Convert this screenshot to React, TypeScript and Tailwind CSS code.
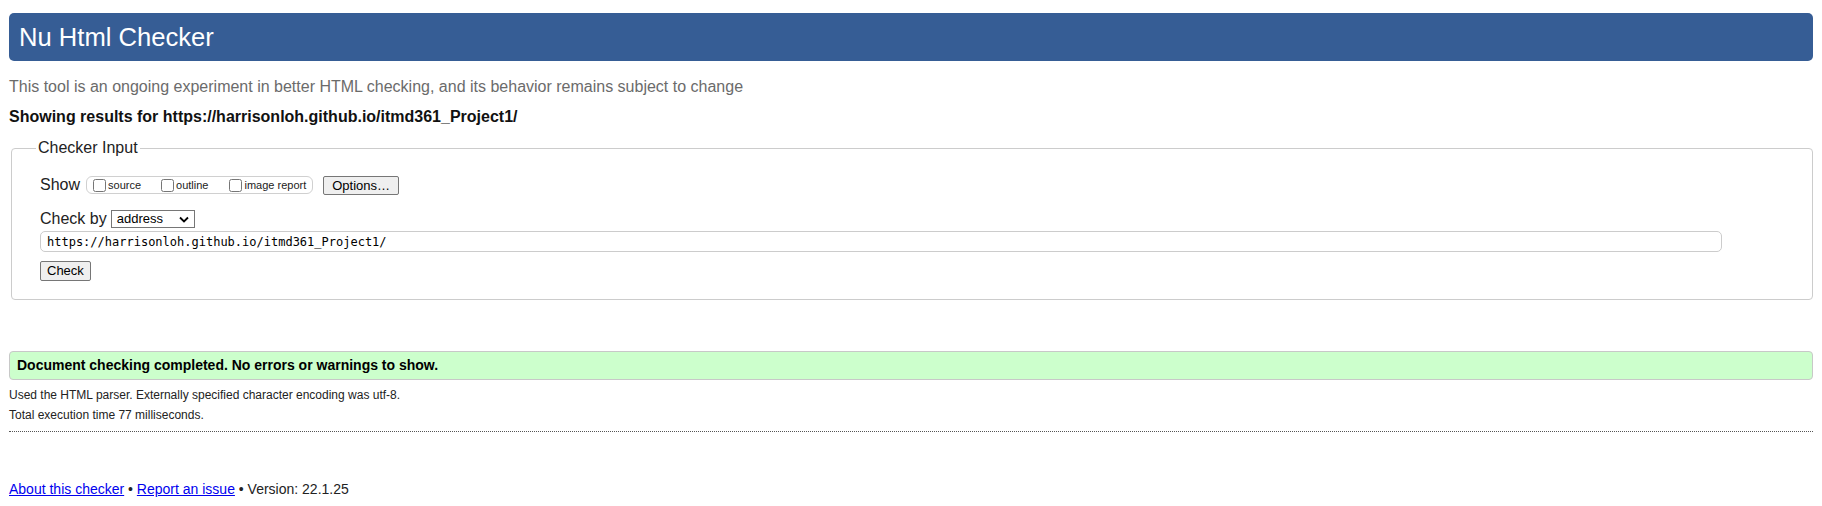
import React from "react";

function Cb({ label, className = "" }: { label: string; className?: string }) {
  return (
    <label className={"inline-flex items-center " + className}>
      <input type="checkbox" className="m-0 w-[13px] h-[13px]" defaultChecked={false} />
      <span className="ml-[2px] text-[11px] leading-[13px] text-[#222]">{label}</span>
    </label>
  );
}

export default function App() {
  return (
    <div className="min-h-[506px] bg-white px-[9px] pt-[13px] font-['Liberation_Sans',Arial,sans-serif] text-black">
      <div className="flex h-[48px] items-center rounded-[5px] bg-[#365d95] pl-[10px] text-[25.6px] text-white">
        Nu Html Checker
      </div>
      <p className="mt-[17px] text-[16px] leading-[18px] text-[#6b6b6b]">
        This tool is an ongoing experiment in better HTML checking, and its behavior remains subject to change
      </p>
      <p className="mt-[12px] text-[16px] font-bold leading-[18px] text-[#111]">
        Showing results for https://harrisonloh.github.io/itmd361_Project1/
      </p>
      <fieldset className="mt-[13px] ml-[2px] rounded-[4px] border border-[#cccccc] pb-[17px] pl-[28px]">
        <legend className="-ml-[4px] px-[2px] text-[16px] leading-[18px] text-[#222]">Checker Input</legend>
        <div className="mt-[16px] flex items-center text-[16px] text-[#222]">
          <span>Show</span>
          <span className="ml-[6px] inline-flex h-[18px] items-center rounded-[6px] border border-[#d0d0d0] pl-[6px] pr-[6px]">
            <Cb label="source" />
            <Cb label="outline" className="ml-[20px]" />
            <Cb label="image report" className="ml-[21px]" />
          </span>
          <button className="ml-[10px] h-[19px] rounded-[2px] border border-[#767676] bg-[#efefef] px-[8px] text-[13px] leading-[17px] text-black">
            Options…
          </button>
        </div>
        <div className="mt-[10px] flex items-center text-[16px] text-[#222]">
          <span>Check by</span>
          <span className="ml-[4px] inline-flex h-[18px] w-[84px] items-center justify-between border border-[#767676] bg-white pl-[5px] pr-[5px] text-[13px] text-black">
            <span>address</span>
            <svg width="10" height="7" viewBox="0 0 10 7" className="mt-[1px]">
              <path d="M1 1.5 L5 5.5 L9 1.5" fill="none" stroke="#000" strokeWidth="1.8" />
            </svg>
          </span>
        </div>
        <div className="flex h-[21px] w-[1682px] items-center rounded-[5px] border border-[#cccccc] bg-white pl-[6px] font-['DejaVu_Sans_Mono','Liberation_Mono',monospace] text-[12px] text-black">
          https://harrisonloh.github.io/itmd361_Project1/
        </div>
        <button className="mt-[9px] h-[20px] rounded-[2px] border border-[#767676] bg-[#efefef] px-[6px] text-[13px] leading-[18px] text-black">
          Check
        </button>
      </fieldset>
      <div className="mt-[51px] flex h-[29px] items-center rounded-[4px] border border-[#c8c8c8] bg-[#ccffcc] pl-[7px] text-[14px] font-bold text-black">
        Document checking completed. No errors or warnings to show.
      </div>
      <p className="mt-[5px] text-[12px] leading-[20px] text-[#222]">
        Used the HTML parser. Externally specified character encoding was utf-8.
      </p>
      <p className="text-[12px] leading-[20px] text-[#222]">Total execution time 77 milliseconds.</p>
      <div className="mt-[6px] border-t border-dotted border-[#555]" />
      <p className="mt-[49px] text-[14px] leading-[16px] text-[#222]">
        <a href="#" className="text-[#0000ee] underline">About this checker</a>
        {" • "}
        <a href="#" className="text-[#0000ee] underline">Report an issue</a>
        {" • Version: 22.1.25"}
      </p>
    </div>
  );
}
